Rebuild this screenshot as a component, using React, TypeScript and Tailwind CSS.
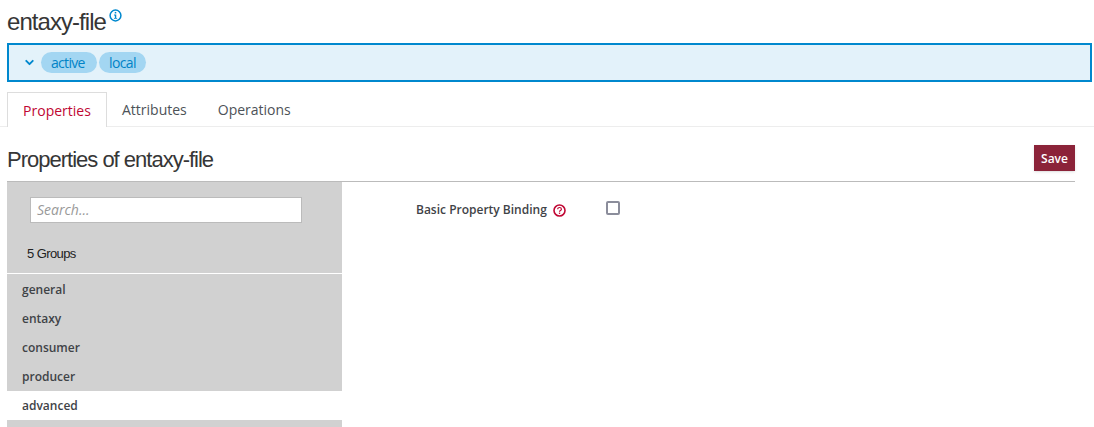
import React from 'react';
import { ChevronDown } from 'lucide-react';

const groups = [
    { name: 'general', active: false },
    { name: 'entaxy', active: false },
    { name: 'consumer', active: false },
    { name: 'producer', active: false },
    { name: 'advanced', active: true },
];

const tabs = ['Properties', 'Attributes', 'Operations'];

const InfoIcon = () => (
    <svg viewBox="0 0 12 12" className="h-[13px] w-[13px]" fill="none">
        <circle cx="6" cy="6" r="5" stroke="#0088ce" strokeWidth="1.4" />
        <rect x="5.3" y="2.7" width="1.4" height="1.4" fill="#0088ce" />
        <path d="M4.6 5h2.1v3.2h.8v.9H4.6v-.9h.8V5.9h-.8z" fill="#0088ce" />
    </svg>
);

const HelpIcon = () => (
    <svg viewBox="0 0 13 13" className="h-[13px] w-[13px]" fill="none">
        <circle cx="6.5" cy="6.5" r="5.5" stroke="#c00633" strokeWidth="1.6" />
        <path d="M4.7 5.2c0-2.3 3.7-2.3 3.7 0 0 1.4-1.9 1.3-1.9 2.6" stroke="#c00633" strokeWidth="1.2" />
        <rect x="5.9" y="8.6" width="1.3" height="1.3" fill="#c00633" />
    </svg>
);

export default function App() {
    return (
        <div className="h-[427px] w-[1094px] overflow-hidden bg-white font-['Open_Sans',sans-serif] text-[#363636]">
            <div className="flex h-[43px] items-start pl-[7px]">
                <h1 className="mt-[6px] font-['Liberation_Sans',sans-serif] text-[24px] leading-[32px] tracking-[-0.95px] font-normal">entaxy-file</h1>
                <span className="mt-[9px] ml-[3px]"><InfoIcon /></span>
            </div>

            <div className="mr-[2px] ml-[7px] flex h-[39px] items-center border-2 border-[#0088ce] bg-[#e3f2fa] pl-[14px]">
                <ChevronDown className="h-[13px] w-[13px] text-[#0088ce]" strokeWidth={3.5} />
                <div className="ml-[5px] flex gap-[2px]">
                    <span className="flex h-[21px] w-[56px] items-center rounded-full bg-[#a3d6f2] pl-[10px] text-[14px] font-medium tracking-[-0.7px] text-[#0083c7]">active</span>
                    <span className="flex h-[21px] w-[47px] items-center rounded-full bg-[#a3d6f2] pl-[10px] text-[14px] font-medium tracking-[-0.6px] text-[#0083c7]">local</span>
                </div>
            </div>

            <div className="mt-[10px] flex h-[35px] border-b border-[#ededed] pl-[7px]">
                {tabs.map((tab, i) => (
                    <div
                        key={tab}
                        className={
                            i === 0
                                ? 'flex h-[35px] w-[100px] items-center justify-center border border-b-0 border-[#ddd] bg-white text-[14px] text-[#c00633]'
                                : 'flex h-[34px] items-center pr-[16px] pl-[15px] text-[14px] text-[#4d5258]'
                        }
                    >
                        {tab}
                    </div>
                ))}
            </div>

            <div className="mr-[19px] ml-[7px] flex h-[55px] items-center justify-between border-b border-[#bbb] pt-[9px]">
                <h2 className="mt-[2px] font-['Liberation_Sans',sans-serif] text-[22px] tracking-[-1px] font-normal">Properties of entaxy-file</h2>
                <button className="mt-[-1px] h-[26px] w-[41px] bg-[#8b2339] pt-[1px] text-[12px] font-semibold text-white shadow-sm">Save</button>
            </div>

            <div className="mr-[19px] ml-[7px] flex">
                <aside className="h-[245px] w-[335px] shrink-0 bg-[#d1d1d1]">
                    <div className="h-[92px] border-b border-white pt-[15px] pl-[23px]">
                        <div className="flex h-[26px] w-[272px] items-center border border-[#bbb] bg-white pb-[1px] pl-[6px] text-[14px] text-[#999] italic">Search...</div>
                        <p className="mt-[21px] -ml-[3px] font-['Liberation_Sans',sans-serif] text-[13px] tracking-[-0.6px] text-[#222]">5 Groups</p>
                    </div>
                    <ul className="mt-[1px]">
                        {groups.map((group) => (
                            <li
                                key={group.name}
                                className={
                                    group.active
                                        ? 'flex h-[29px] items-center bg-white pl-[15px] text-[12px] font-semibold text-[#3f4347]'
                                        : 'flex h-[29px] items-center pl-[15px] text-[12px] font-semibold text-[#3f4347]'
                                }
                            >
                                {group.name}
                            </li>
                        ))}
                    </ul>
                </aside>

                <div className="flex h-[56px] items-center self-start pl-[74px]">
                    <span className="text-[12px] font-semibold text-[#3f4347]">Basic Property Binding</span>
                    <span className="ml-[6px]"><HelpIcon /></span>
                    <input type="checkbox" className="ml-[40px] mt-[-4px] h-[14px] w-[14px] appearance-none rounded-[2px] border-2 border-[#8b8d9b] bg-white" />
                </div>
            </div>
        </div>
    );
}
